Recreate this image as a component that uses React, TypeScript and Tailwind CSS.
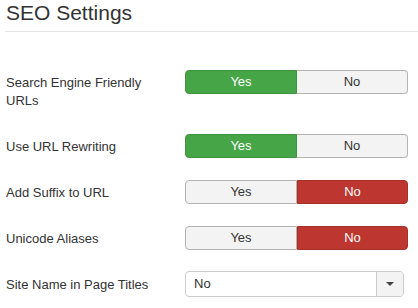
type Choice = 'yes' | 'no'

const rows: { label: string; value: Choice }[] = [
  { label: 'Search Engine Friendly URLs', value: 'yes' },
  { label: 'Use URL Rewriting', value: 'yes' },
  { label: 'Add Suffix to URL', value: 'no' },
  { label: 'Unicode Aliases', value: 'no' },
]

function Toggle({ value }: { value: Choice }) {
  const yes = value === 'yes'
  return (
    <div className="mt-px flex h-6 w-[223px] text-[13px] leading-[18px]">
      <div
        className={
          yes
            ? 'flex w-[112px] items-center justify-center rounded-l-[4px] border border-[#3f933f] bg-[#46a546] text-white'
            : 'flex w-[112px] items-center justify-center rounded-l-[4px] border border-[#b3b3b3] bg-[#f3f3f3] text-[#333]'
        }
      >
        Yes
      </div>
      <div
        className={
          yes
            ? 'flex flex-1 items-center justify-center rounded-r-[4px] border border-l-0 border-[#b3b3b3] bg-[#f3f3f3] text-[#333]'
            : 'flex flex-1 items-center justify-center rounded-r-[4px] border border-[#a52f29] bg-[#bd362f] text-white'
        }
      >
        No
      </div>
    </div>
  )
}

export default function App() {
  return (
    <div className="h-[308px] w-[418px] overflow-hidden bg-white pl-[5px] text-[#333]" style={{ fontFamily: '"Liberation Sans", Arial, sans-serif' }}>
      <h2 className="mt-px pl-px text-[21px] leading-[24px] font-normal">SEO Settings</h2>
      <div className="mt-[6px] border-t border-[#e5e5e5]" />

      <div className="mt-[37px] flex flex-col gap-[18px]">
        {rows.map((row) => (
          <div key={row.label} className="flex">
            <div className="w-[160px] py-[5px] pl-px text-[13px] leading-[18px]">{row.label}</div>
            <div className="ml-5">
              <Toggle value={row.value} />
            </div>
          </div>
        ))}

        <div className="flex">
          <div className="w-[160px] py-[5px] pl-px text-[13px] leading-[18px]">Site Name in Page Titles</div>
          <div className="ml-5 flex h-[26px] w-[219px] overflow-hidden rounded-[4px] border border-[#ccc] text-[13px]">
            <div className="flex flex-1 items-center pl-2">No</div>
            <div className="flex w-[27px] items-center justify-center border-l border-[#ccc] bg-[#f3f3f3]">
              <svg width="8" height="4" viewBox="0 0 8 4">
                <path d="M0 0h8L4 4z" fill="#444" />
              </svg>
            </div>
          </div>
        </div>
      </div>
    </div>
  )
}
